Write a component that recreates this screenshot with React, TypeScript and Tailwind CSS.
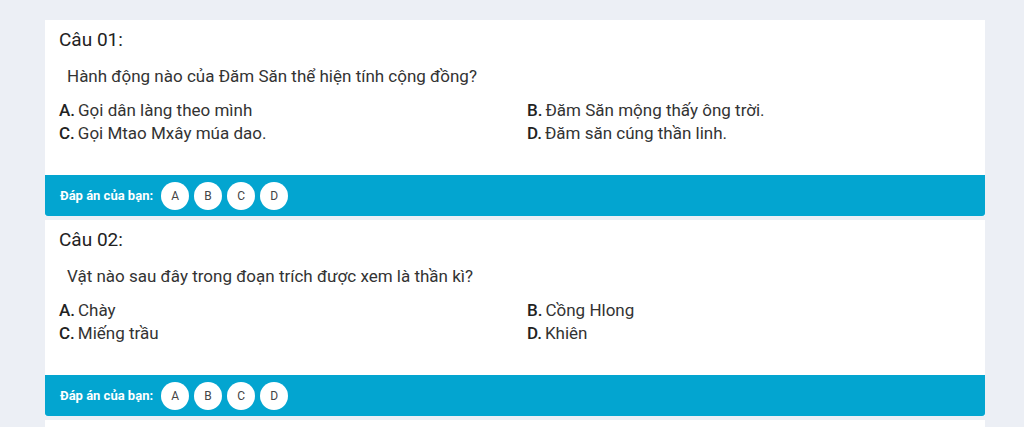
import React from 'react';

type Question = {
  id: string;
  text: string;
  options: { label: string; text: string }[];
};

const questions: Question[] = [
  {
    id: '01',
    text: 'Hành động nào của Đăm Săn thể hiện tính cộng đồng?',
    options: [
      { label: 'A.', text: 'Gọi dân làng theo mình' },
      { label: 'B.', text: 'Đăm Săn mộng thấy ông trời.' },
      { label: 'C.', text: 'Gọi Mtao Mxây múa dao.' },
      { label: 'D.', text: 'Đăm săn cúng thần linh.' },
    ],
  },
  {
    id: '02',
    text: 'Vật nào sau đây trong đoạn trích được xem là thần kì?',
    options: [
      { label: 'A.', text: 'Chày' },
      { label: 'B.', text: 'Cồng Hlong' },
      { label: 'C.', text: 'Miếng trầu' },
      { label: 'D.', text: 'Khiên' },
    ],
  },
];

const QuestionCard: React.FC<{ q: Question }> = ({ q }) => (
  <div className="bg-white flex flex-col">
    {/* Content */}
    <div className="px-[14px] pt-2 pb-[30px]">
      <h3 className="text-[19px] leading-6 font-normal text-[#222]">Câu {q.id}:</h3>
      <p className="mt-3 pl-2 text-[17px] leading-6 text-[#333]">{q.text}</p>
      <div className="mt-[11px] grid grid-cols-[468px_1fr] text-[17px] leading-[23px] text-[#333]">
        {q.options.map((o) => (
          <div key={o.label} className="flex gap-[3px]">
            <span className="font-medium text-[#222]">{o.label}</span>
            <span>{o.text}</span>
          </div>
        ))}
      </div>
    </div>

    {/* Answer bar */}
    <div className="h-[41px] bg-[#03a5d0] rounded-b-[3px] flex items-center pl-[15px] gap-[8px]">
      <span className="text-white text-[13px] font-bold">Đáp án của bạn:</span>
      <div className="flex gap-[5px]">
        {['A', 'B', 'C', 'D'].map((l) => (
          <button
            key={l}
            className="w-[28px] h-[28px] rounded-full bg-white text-[12px] text-[#444] flex items-center justify-center"
          >
            {l}
          </button>
        ))}
      </div>
    </div>
  </div>
);

export default function App() {
  return (
    <div
      className="h-[427px] overflow-hidden bg-[#eceff5] pt-5 pl-[45px] pr-[39px]"
      style={{ fontFamily: 'Roboto, "Noto Sans", sans-serif' }}
    >
      <div className="flex flex-col gap-[4px]">
        {questions.map((q) => (
          <QuestionCard key={q.id} q={q} />
        ))}
        {/* next question card, scrolled below the fold */}
        <div className="bg-white h-[40px]" />
      </div>
    </div>
  );
}
